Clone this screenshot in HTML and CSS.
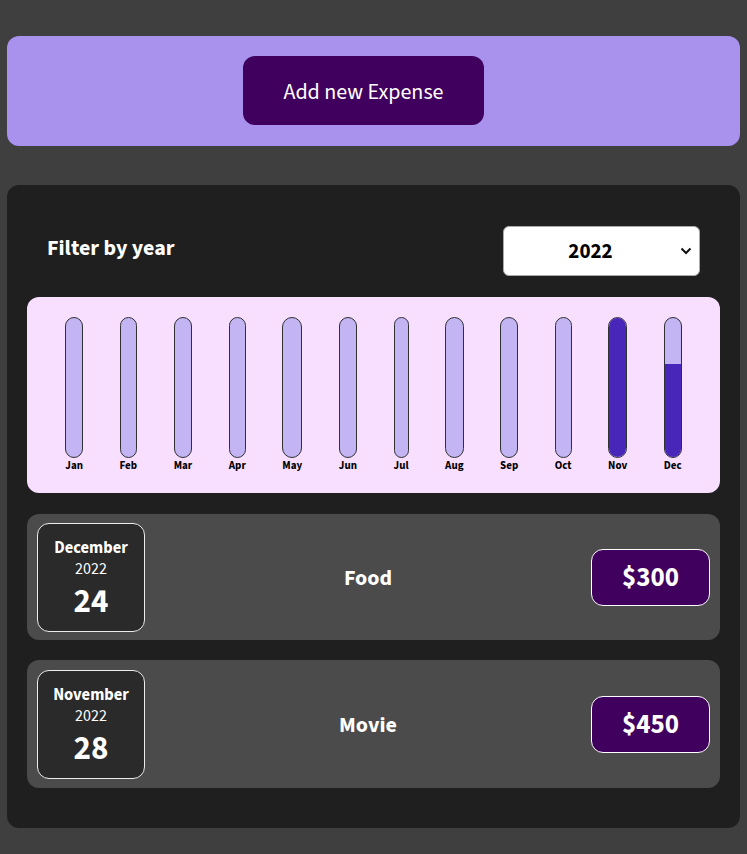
FILE: index.html
```html
<!DOCTYPE html>
<html lang="en">
<head>
<meta charset="utf-8">
<title>Expenses</title>
<link rel="stylesheet" href="styles.css">
</head>
<body>
<div class="app">
  <div class="new-expense">
    <button class="new-expense__btn">Add new Expense</button>
  </div>
  <div class="expenses">
    <div class="filter">
      <label class="filter__label">Filter by year</label>
      <div class="filter__control">
        <select class="filter__select">
          <option>2022</option>
          <option>2021</option>
          <option>2020</option>
          <option>2019</option>
        </select>
        <svg class="filter__chevron" width="12" height="8" viewBox="0 0 12 8"><path d="M1.5 1.5 6 6l4.5-4.5" fill="none" stroke="#111" stroke-width="2"/></svg>
      </div>
    </div>
    <div class="chart">
      <div class="bar"><div class="bar__inner"><div class="bar__fill" style="height:0%"></div></div><div class="bar__label">Jan</div></div>
      <div class="bar"><div class="bar__inner"><div class="bar__fill" style="height:0%"></div></div><div class="bar__label">Feb</div></div>
      <div class="bar"><div class="bar__inner"><div class="bar__fill" style="height:0%"></div></div><div class="bar__label">Mar</div></div>
      <div class="bar"><div class="bar__inner"><div class="bar__fill" style="height:0%"></div></div><div class="bar__label">Apr</div></div>
      <div class="bar"><div class="bar__inner"><div class="bar__fill" style="height:0%"></div></div><div class="bar__label">May</div></div>
      <div class="bar"><div class="bar__inner"><div class="bar__fill" style="height:0%"></div></div><div class="bar__label">Jun</div></div>
      <div class="bar"><div class="bar__inner"><div class="bar__fill" style="height:0%"></div></div><div class="bar__label">Jul</div></div>
      <div class="bar"><div class="bar__inner"><div class="bar__fill" style="height:0%"></div></div><div class="bar__label">Aug</div></div>
      <div class="bar"><div class="bar__inner"><div class="bar__fill" style="height:0%"></div></div><div class="bar__label">Sep</div></div>
      <div class="bar"><div class="bar__inner"><div class="bar__fill" style="height:0%"></div></div><div class="bar__label">Oct</div></div>
      <div class="bar"><div class="bar__inner"><div class="bar__fill" style="height:100%"></div></div><div class="bar__label">Nov</div></div>
      <div class="bar"><div class="bar__inner"><div class="bar__fill" style="height:66.7%"></div></div><div class="bar__label">Dec</div></div>
    </div>
    <ul class="list">
      <li class="item">
        <div class="date">
          <div class="date__month">December</div>
          <div class="date__year">2022</div>
          <div class="date__day">24</div>
        </div>
        <h2 class="item__title">Food</h2>
        <div class="item__price">$300</div>
      </li>
      <li class="item">
        <div class="date">
          <div class="date__month">November</div>
          <div class="date__year">2022</div>
          <div class="date__day">28</div>
        </div>
        <h2 class="item__title">Movie</h2>
        <div class="item__price">$450</div>
      </li>
    </ul>
  </div>
</div>
</body>
</html>
```

FILE: styles.css
```css
* { box-sizing: border-box; }

html, body {
  margin: 0;
  background: #3f3f3f;
  font-family: "Source Sans Pro", "Source Sans 3", Lato, "Noto Sans", sans-serif;
}

.app {
  padding: 36px 7px 26px;
  display: flex;
  flex-direction: column;
  gap: 39px;
}

.new-expense {
  background: #a892ee;
  border-radius: 12px;
  height: 110px;
  display: flex;
  justify-content: center;
  align-items: center;
}

.new-expense__btn {
  width: 241px;
  height: 69px;
  margin-left: -20px;
  margin-top: -1px;
  border: none;
  border-radius: 12px;
  background: #40005d;
  color: #fff;
  font-family: inherit;
  font-size: 22px;
  padding-top: 3px;
}

.expenses {
  background: #1f1f1f;
  border-radius: 12px;
  padding: 41px 20px 40px;
}

.filter {
  display: flex;
  justify-content: space-between;
  align-items: center;
  padding: 0 20px;
  margin-bottom: 21px;
}

.filter__label {
  color: #fff;
  font-weight: bold;
  font-size: 22px;
  margin-top: -6px;
}

.filter__control {
  position: relative;
}

.filter__select {
  display: block;
  width: 197px;
  height: 50px;
  border-radius: 6px;
  border: 1px solid #aaa;
  background: #fff;
  font-family: inherit;
  font-weight: bold;
  font-size: 21px;
  text-align: center;
  text-align-last: center;
  color: #000;
  padding: 0 22px 0 0;
  appearance: none;
  -webkit-appearance: none;
}

.filter__chevron {
  position: absolute;
  right: 8px;
  top: 21px;
  pointer-events: none;
}

.chart {
  height: 196px;
  background: #f8dfff;
  border-radius: 12px;
  padding: 20px 20px 20px;
  display: flex;
  justify-content: space-around;
}

.bar {
  height: 100%;
  display: flex;
  flex-direction: column;
  align-items: center;
}

.bar__inner {
  flex: 1;
  width: 100%;
  border: 1px solid #313131;
  border-radius: 12px;
  background: #c3b4f3;
  overflow: hidden;
  display: flex;
  flex-direction: column;
  justify-content: flex-end;
}

.bar__fill {
  background: #4826b9;
  width: 100%;
}

.bar__label {
  font-weight: bold;
  font-size: 11px;
  color: #000;
  margin-top: 1px;
  line-height: 14px;
}

.list {
  list-style: none;
  margin: 21px 0 0;
  padding: 0;
  display: flex;
  flex-direction: column;
  gap: 20px;
}

.item {
  background: #4b4b4b;
  border-radius: 12px;
  padding: 8px 10px;
  display: flex;
  align-items: center;
  min-height: 126px;
}

.item:last-child {
  min-height: 128px;
}

.date {
  width: 108px;
  height: 109px;
  background: #2a2a2a;
  border: 1px solid #ececec;
  border-radius: 12px;
  color: #fff;
  display: flex;
  flex-direction: column;
  align-items: center;
  justify-content: flex-start;
  padding-top: 14px;
}

.date__month {
  font-weight: bold;
  font-size: 16.5px;
  line-height: 20px;
}

.date__year {
  font-size: 16px;
  line-height: 22px;
}

.date__day {
  font-weight: bold;
  font-size: 33px;
  line-height: 44px;
}

.item__title {
  flex: 1;
  text-align: center;
  color: #fff;
  font-size: 22px;
  font-weight: bold;
  margin: 0;
  padding-top: 2px;
}

.item__price {
  width: 119px;
  height: 57px;
  background: #40005d;
  border: 1px solid #fff;
  border-radius: 12px;
  color: #fff;
  font-size: 27px;
  font-weight: bold;
  display: flex;
  align-items: center;
  justify-content: center;
  margin-top: 0;
}
```
